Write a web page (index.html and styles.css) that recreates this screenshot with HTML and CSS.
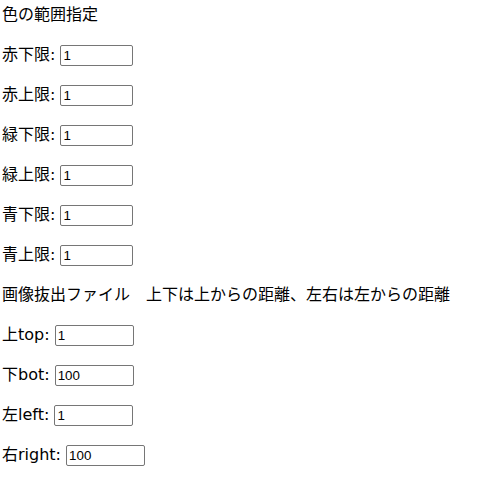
FILE: index.html
```html
<!DOCTYPE html>
<html lang="ja">
<head>
<meta charset="utf-8">
<title>色の範囲指定</title>
<link rel="stylesheet" href="styles.css">
</head>
<body>
<div class="form">
  <p class="row">色の範囲指定</p>
  <p class="row">赤下限: <input class="num num-color" type="text" value="1"></p>
  <p class="row">赤上限: <input class="num num-color" type="text" value="1"></p>
  <p class="row">緑下限: <input class="num num-color" type="text" value="1"></p>
  <p class="row">緑上限: <input class="num num-color" type="text" value="1"></p>
  <p class="row">青下限: <input class="num num-color" type="text" value="1"></p>
  <p class="row">青上限: <input class="num num-color" type="text" value="1"></p>
  <p class="row">画像抜出ファイル　上下は上からの距離、左右は左からの距離</p>
  <p class="row">上top: <input class="num num-pos" type="text" value="1"></p>
  <p class="row">下bot: <input class="num num-pos" type="text" value="100"></p>
  <p class="row">左left: <input class="num num-pos" type="text" value="1"></p>
  <p class="row">右right: <input class="num num-pos" type="text" value="100"></p>
</div>
</body>
</html>
```
FILE: styles.css
```css
html, body {
  background: #ffffff;
}
body {
  margin: 0;
  padding: 3px 0 0 2px;
  font-family: "DejaVu Sans", "Noto Sans CJK JP", sans-serif;
  font-size: 16px;
  color: #000000;
}
.form {
  display: flex;
  flex-direction: column;
  gap: 16px;
}
.row {
  margin: 0;
  height: 24px;
  line-height: 24px;
  white-space: nowrap;
}
.num {
  box-sizing: border-box;
  height: 21px;
  padding: 1px 2px;
  border: 1px solid #767676;
  border-radius: 2px;
  font-family: "Liberation Sans", Arial, sans-serif;
  font-size: 13.33px;
  color: #000000;
  vertical-align: middle;
}
.num-color {
  width: 73px;
}
.num-pos {
  width: 79px;
}
```
